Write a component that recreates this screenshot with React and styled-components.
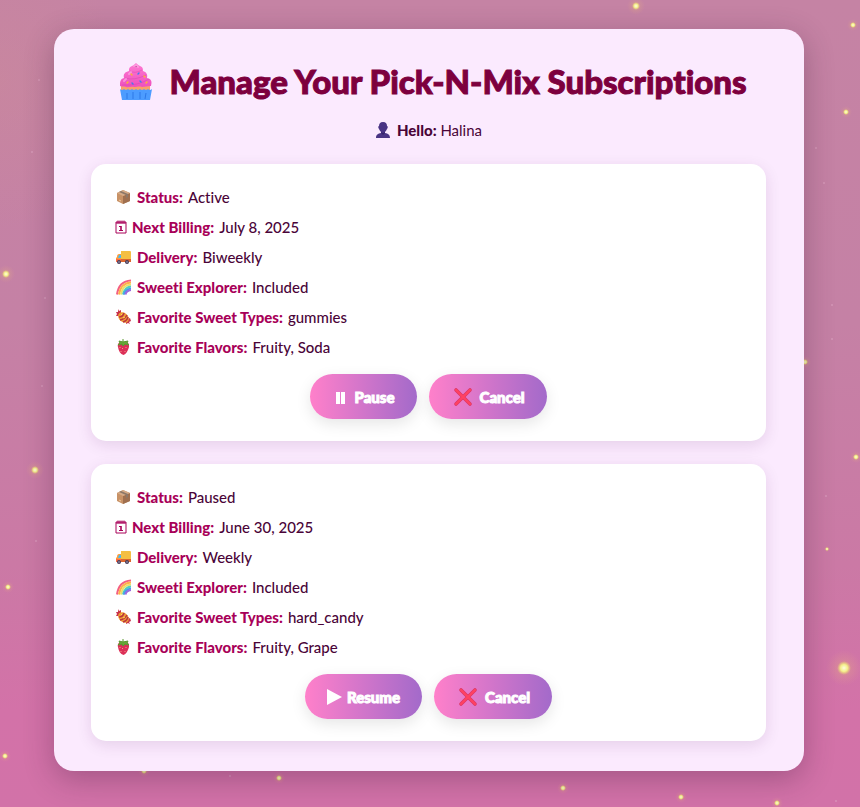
import React from "react";
import styled, { createGlobalStyle } from "styled-components";

const GlobalStyle = createGlobalStyle`
  *, *::before, *::after { box-sizing: border-box; }
  body {
    margin: 0;
    background: #cc7aa6;
    color: #4a0438;
    font-family: Lato, "Open Sans", sans-serif;
    font-size: 15px;
    font-variant-ligatures: none;
    line-height: 30px;
  }
`;

const Page = styled.main`
  position: relative;
  min-height: 100vh;
  padding: 29px 56px 36px 54px;
  background:
    radial-gradient(ellipse 120px 150px at 0 80px, rgba(210, 145, 145, 0.25), transparent),
    linear-gradient(#c583a4 0%, #c581a5 40%, #cb79a5 70%, #d372a8 88%, #d272a8 100%);
`;

const Sky = styled.svg`
  position: absolute;
  inset: 0;
  width: 100%;
  height: 100%;
  pointer-events: none;
`;

const Panel = styled.section`
  position: relative;
  max-width: 800px;
  margin: 0 auto;
  padding: 30px 38px 30px 37px;
  border-radius: 20px;
  background: #fbeafe;
  box-shadow: 0 8px 30px rgba(50, 20, 50, 0.3);
`;

const Title = styled.h1`
  display: flex;
  align-items: center;
  justify-content: center;
  gap: 15px;
  margin: 0;
  padding-left: 8px;
  color: #7d003e;
  font-size: 33px;
  font-weight: 900;
  line-height: 44px;
  -webkit-text-stroke: 1px #7d003e;
`;

const Greeting = styled.p`
  display: flex;
  align-items: center;
  justify-content: center;
  gap: 6px;
  margin: 12px 0 19px;
`;

const Strong = styled.strong`
  font-weight: 900;
`;

const CardList = styled.div`
  display: grid;
  gap: 23px;
`;

const Card = styled.article`
  padding: 18px 24px 22px;
  border-radius: 15px;
  background: #fff;
  box-shadow: 0 4px 15px rgba(70, 20, 80, 0.12);
`;

const Details = styled.dl`
  margin: 0;
`;

const Row = styled.div`
  display: flex;
  align-items: center;
  gap: 5px;
`;

const Label = styled.dt`
  display: flex;
  align-items: center;
  gap: ${(p) => (p.$tight ? "5px" : "6px")};
  color: #a80058;
  font-weight: 900;
`;

const Value = styled.dd`
  margin: 0;
  font-weight: 500;
`;

const Actions = styled.div`
  display: flex;
  justify-content: center;
  flex-wrap: wrap;
  gap: 12px;
  margin-top: 12px;
`;

const Button = styled.button`
  display: flex;
  align-items: center;
  gap: 5px;
  height: 45px;
  padding: 0 22px;
  border: 0;
  border-radius: 30px;
  background: linear-gradient(90deg, #ff80ca, #a36aca);
  box-shadow: 0 5px 15px rgba(0, 0, 0, 0.1);
  color: #fff;
  font-family: Lato, sans-serif;
  font-size: 15px;
  font-weight: 900;
  -webkit-text-stroke: 1px #fff;
  cursor: pointer;
`;

const Glyph = styled.svg`
  display: block;
  flex: none;
  width: ${(p) => p.$w}px;
  height: ${(p) => p.$h}px;
`;

const Cupcake = () => (
  <Glyph $w={36} $h={40} viewBox="0 0 36 40" aria-hidden="true">
    <defs>
      <linearGradient id="frosting" x1="0" y1="0" x2="0" y2="1">
        <stop offset="0" stopColor="#ff7ad3" />
        <stop offset="1" stopColor="#ee50bd" />
      </linearGradient>
    </defs>
    <path d="M3 24h29v6H3z" fill="#f9a06c" />
    <path d="M2 28q2 2 4 0 2 2 4 0 2 2 4 0 2 2 4 0 2 2 4 0 2 2 4 0 2 2 4 0 2 2 4 0l-2 11H4z" fill="#4c9cff" />
    <path d="M9 32v6M15 31v7M22 31v7M28 32l-1 6" stroke="#2d79e7" strokeWidth="1" />
    <path d="M18 2q-2 2-4 3c-3 1-3 3-3 5-4 1-6 3-5 7-4 1-4 4-4 8 2 1 4 0 6 1 3 1 5-1 8 0 3 0 5-1 8 0 3 0 5-1 9-1 1-4 1-7-4-8 1-4-1-6-4-7 0-2 0-4-3-5q-2-1-4-3" fill="url(#frosting)" />
    <path d="M12 10q5 3 12-1M7 17q9 3 21-3M4 24q16 1 27-6" fill="none" stroke="#cf3cab" strokeWidth="1" opacity=".4" />
    <path d="M16 5q3-2 4 1M11 13l2-2M6 20l2-2" stroke="#ffa5e4" strokeWidth="2" strokeLinecap="round" opacity=".7" />
    <path d="M13 13l1 1M26 15l1 1M9 22l1-1M28 22l1-1" stroke="#ffb52e" strokeWidth="1.4" strokeLinecap="round" />
    <path d="M21 12l-1 1M14 22l1 1M23 21l-1-1" stroke="#417bf0" strokeWidth="1.4" strokeLinecap="round" />
  </Glyph>
);

const Person = () => (
  <Glyph $w={16} $h={16} viewBox="0 0 16 16" aria-hidden="true">
    <path d="M8 0C5 0 4 2 4 4c-1 0-1 2 0 3 .4 1 1 2 2 3v1c-3 .7-5 1.600-5 5h14c0-3.400-2-4.300-5-5v-1c1-1 1.600-2 2-3 1-1 1-3 0-3 0-2-1-4-4-4" fill="#493484" />
    <path d="M6 10q2 2 4 0v1l-2 2-2-2z" fill="#33226a" />
  </Glyph>
);

const Package = () => (
  <Glyph $w={16} $h={16} viewBox="0 0 16 16" aria-hidden="true">
    <path d="M2 4l6-3 7 3v8l-7 3-6-3z" fill="#c89266" />
    <path d="M8 7l7-3v8l-7 3z" fill="#a0704f" />
    <path d="M2 4l6-3 7 3-7 3z" fill="#d5aa86" />
    <path d="M4 3l7 3v3l2-1V5L6 2z" fill="#8d7868" />
    <path d="M4 11l2 1" stroke="#f0c99e" />
  </Glyph>
);

const Calendar = () => (
  <Glyph $w={12} $h={14} viewBox="0 0 12 14" aria-hidden="true">
    <path d="M1 2h10v11H1zM1 3h10M3 .5v3M5 .5v3M7 .5v3M9 .5v3M4 6.500h2M4 10.500h4" fill="none" stroke="#a80058" strokeWidth="1" />
    <path d="M6 6v5" stroke="#a80058" strokeWidth="1.600" />
  </Glyph>
);

const Truck = () => (
  <Glyph $w={16} $h={16} viewBox="0 0 16 16" aria-hidden="true">
    <path d="M6 2h9q1 0 1 1v8H6z" fill="#f4bf43" />
    <path d="M6 10h10v3H6z" fill="#dc662f" />
    <path d="M6 5H4Q2 5 2 8l-1 1v4h5z" fill="#ff9c3a" />
    <path d="M6 6H4L3 9h3z" fill="#42bafa" />
    <path d="M1 10h5v3H1z" fill="#ff6b43" />
    <circle cx="4" cy="13" r="2" fill="#423957" />
    <circle cx="12" cy="13" r="2" fill="#423957" />
    <circle cx="4" cy="13" r=".8" fill="#b8a7bc" />
    <circle cx="12" cy="13" r=".8" fill="#b8a7bc" />
  </Glyph>
);

const Rainbow = () => (
  <Glyph $w={16} $h={16} viewBox="0 0 16 16" aria-hidden="true">
    <g fill="none" strokeWidth="2">
      <path d="M2 15.500C3 8 7 2 16 1.500" stroke="#f45f80" />
      <path d="M4 15.500C5 9 8 4 16 3.500" stroke="#ffb04a" />
      <path d="M6 15.500C7 10 9 6 16 5.500" stroke="#e9df68" />
      <path d="M8 15.500C9 11 11 8 16 7.500" stroke="#55cfb9" />
      <path d="M9 15.500C10 12 12 10 16 9.500" stroke="#469bef" />
      <path d="M10.500 15.500C11 13 13 11.500 16 11" stroke="#9a68df" />
    </g>
  </Glyph>
);

const Candy = () => (
  <Glyph $w={16} $h={16} viewBox="0 0 16 16" aria-hidden="true">
    <path d="M6 6L6 1 4 2 3 0 3 3 1 3l1 2-1 2 5 0zM11 11l0 4 2-1 2 1-1-2 2-1-1-3z" fill="#c83249" />
    <ellipse cx="8.500" cy="8.500" rx="6" ry="4.500" transform="rotate(42 8.500 8.500)" fill="#ef9d35" />
    <path d="M4 8q4 0 5-4M5 11q5-1 7-5M8 13q4-1 5-5" fill="none" stroke="#ba3440" strokeWidth="1.500" />
    <path d="M6 6l1-1M8 9l2-1" stroke="#ffd65b" />
  </Glyph>
);

const Strawberry = () => (
  <Glyph $w={16} $h={16} viewBox="0 0 16 16" aria-hidden="true">
    <path d="M8.500 4c4-2 6 0 5.500 4-1 4-3 7-5.500 8-3-1-5-4-5.500-8-1-4 2-6 5.500-4" fill="#dc2f58" />
    <path d="M8 3V0M8 3L4 2l1 2-2 2 4-1 1 2 2-2 4 1-2-2 1-2z" fill="#65a936" stroke="#5b992e" strokeWidth="1" />
    <path d="M5 8v1M7.500 9v1M11 8v1M6 12v1M10 12v1" stroke="#f39b87" />
  </Glyph>
);

const Pause = () => (
  <Glyph $w={17} $h={16} viewBox="0 0 17 16" aria-hidden="true">
    <path d="M4 3h4v12H4zM9 3h4v12H9z" fill="#fff" />
  </Glyph>
);

const Play = () => (
  <Glyph $w={15} $h={16} viewBox="0 0 15 16" aria-hidden="true">
    <path d="M0 0l15 8-15 8z" fill="#fff" />
  </Glyph>
);

const Cross = () => (
  <Glyph $w={24} $h={20} viewBox="0 0 24 20" aria-hidden="true">
    <path d="M5 3l14 14M19 3L5 17" stroke="#dc3666" strokeWidth="3.600" strokeLinecap="round" />
    <path d="M5 3l14 14M19 3L5 17" stroke="#ff4262" strokeWidth="2.400" strokeLinecap="round" />
  </Glyph>
);

const stars = [
  [636, 6, 3], [853, 25, 2], [846, 112, 2], [6, 274, 3], [35, 470, 3],
  [8, 587, 2], [5, 756, 2], [805, 362, 2], [856, 457, 2], [827, 549, 1],
  [844, 668, 6], [144, 771, 2], [279, 778, 2], [563, 788, 2], [681, 797, 2],
  [777, 803, 2],
];

const specks = [
  [45, 298], [42, 386], [36, 541], [32, 152], [824, 183], [832, 339],
  [826, 496], [832, 305], [816, 148], [39, 80], [230, 776], [836, 801],
];

const NightSky = () => (
  <Sky aria-hidden="true">
    <defs>
      <radialGradient id="glow">
        <stop offset="0" stopColor="#f7e777" stopOpacity=".6" />
        <stop offset=".3" stopColor="#edbd78" stopOpacity=".25" />
        <stop offset="1" stopColor="#edaa82" stopOpacity="0" />
      </radialGradient>
      <radialGradient id="core">
        <stop offset="0" stopColor="#fffde0" />
        <stop offset=".5" stopColor="#f4ef8c" />
        <stop offset="1" stopColor="#e9d36d" stopOpacity="0" />
      </radialGradient>
    </defs>
    {stars.map(([x, y, r]) => (
      <g key={`${x}-${y}`}>
        <circle cx={`${x / 8.6}%`} cy={`${y / 8.07}%`} r={r * 3} fill="url(#glow)" />
        <circle cx={`${x / 8.6}%`} cy={`${y / 8.07}%`} r={r + 1} fill="url(#core)" />
      </g>
    ))}
    {specks.map(([x, y]) => (
      <circle key={`${x}-${y}`} cx={`${x / 8.6}%`} cy={`${y / 8.07}%`} r="1" fill="#e0a8c5" opacity=".55" />
    ))}
  </Sky>
);

const subscriptions = [
  { status: "Active", billing: "July 8, 2025", delivery: "Biweekly", types: "gummies", flavors: "Fruity, Soda" },
  { status: "Paused", billing: "June 30, 2025", delivery: "Weekly", types: "hard_candy", flavors: "Fruity, Grape" },
];

const Detail = ({ icon, label, value, tight }) => (
  <Row>
    <Label $tight={tight}>{icon}{label}</Label>
    <Value>{value}</Value>
  </Row>
);

const Subscription = ({ item }) => (
  <Card>
    <Details>
      <Detail icon={<Package />} label="Status:" value={item.status} />
      <Detail icon={<Calendar />} label="Next Billing:" value={item.billing} tight />
      <Detail icon={<Truck />} label="Delivery:" value={item.delivery} />
      <Detail icon={<Rainbow />} label="Sweeti Explorer:" value="Included" />
      <Detail icon={<Candy />} label="Favorite Sweet Types:" value={item.types} />
      <Detail icon={<Strawberry />} label="Favorite Flavors:" value={item.flavors} />
    </Details>
    <Actions>
      {item.status === "Active" ? (
        <Button type="button"><Pause />Pause</Button>
      ) : (
        <Button type="button"><Play />Resume</Button>
      )}
      <Button type="button"><Cross />Cancel</Button>
    </Actions>
  </Card>
);

export default function App() {
  return (
    <>
      <GlobalStyle />
      <Page>
        <NightSky />
        <Panel>
          <Title><Cupcake />Manage Your Pick-N-Mix Subscriptions</Title>
          <Greeting><Person /><span><Strong>Hello:</Strong> Halina</span></Greeting>
          <CardList>
            {subscriptions.map((item) => <Subscription key={item.status} item={item} />)}
          </CardList>
        </Panel>
      </Page>
    </>
  );
}
